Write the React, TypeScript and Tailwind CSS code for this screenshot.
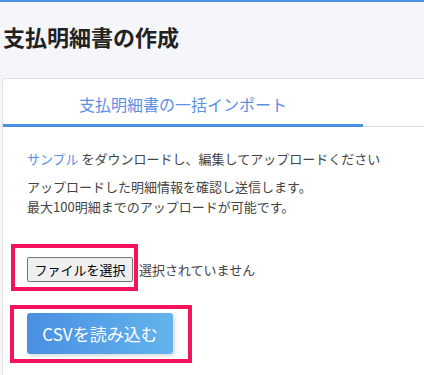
import React from 'react';

const App: React.FC = () => {
  return (
    <div
      className="flex h-screen w-full flex-col overflow-hidden bg-[#f5f6fa] border-t-2 border-[#4a90e2] text-[#333]"
      style={{ fontFamily: '"Noto Sans CJK JP", "Noto Sans", sans-serif' }}
    >
      {/* Page title */}
      <h1 className="pl-[3px] pt-[20px] text-[22px] leading-[28px] font-bold text-[#222]">支払明細書の作成</h1>

      {/* Card */}
      <div className="ml-[2px] mt-[28px] -mr-4 flex-1 rounded-tl-[4px] border border-b-0 border-[#e2e2e2] bg-white">
        {/* Tabs */}
        <div className="flex border-b border-[#dcdcdc]">
          <div className="w-[360px] pt-[13px] pb-[8px] text-center text-[16px] leading-[24px] text-[#5a8fe6] border-b-[3px] border-[#4a90e2] -mb-px">
            支払明細書の一括インポート
          </div>
        </div>

        <div className="pl-[24px] pt-[22px]">
          <p className="text-[13px] leading-[20px] text-[#444]">
            <span className="text-[#5a8fe6]">サンプル</span> をダウンロードし、編集してアップロードください
          </p>
          <p className="mt-[8px] text-[13px] leading-[20px] text-[#444]">
            アップロードした明細情報を確認し送信します。
            <br />
            最大100明細までのアップロードが可能です。
          </p>

          {/* File selector */}
          <div className="relative mt-[40px] flex items-center">
            <button className="h-[25px] w-[106px] rounded-[2px] border border-[#767676] bg-[#efefef] text-[13px] leading-none text-black">
              ファイルを選択
            </button>
            <span className="ml-[6px] text-[13px] text-[#444]">選択されていません</span>
            <div className="absolute left-[-16px] top-[-13px] h-[47px] w-[127px] border-[4px] border-[#f5135b]" />
          </div>

          {/* Submit */}
          <div className="relative mt-[31px] flex">
            <button className="h-[41px] w-[146px] rounded-[3px] bg-gradient-to-r from-[#4a8fe2] to-[#63b4ec] text-[17px] text-white shadow-[2px_2px_4px_rgba(0,0,0,0.15)]">
              CSVを読み込む
            </button>
            <div className="absolute left-[-17px] top-[-8px] h-[58px] w-[182px] border-[4px] border-[#f5135b]" />
          </div>
        </div>
      </div>
    </div>
  );
};

export default App;
